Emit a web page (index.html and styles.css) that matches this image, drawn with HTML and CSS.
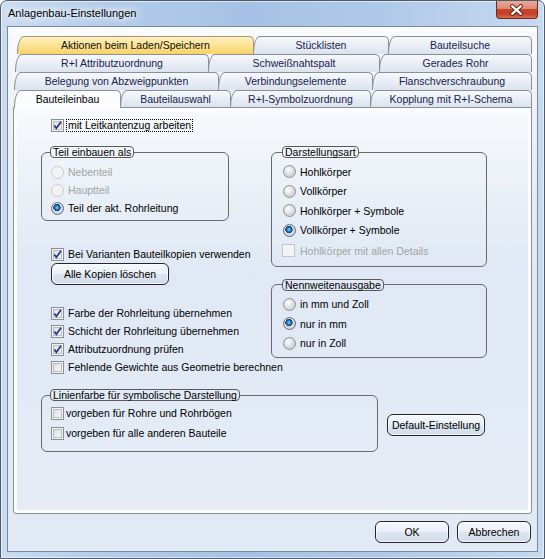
FILE: index.html
```html
<!DOCTYPE html>
<html lang="de">
<head>
<meta charset="utf-8">
<title>Anlagenbau-Einstellungen</title>
<link rel="stylesheet" href="styles.css">
</head>
<body>
<div class="window">
  <div class="titlebar">
    <span class="title">Anlagenbau-Einstellungen</span>
    <div class="close">
      <svg width="42" height="18" viewBox="0 0 42 18">
        <path d="M16.5 5 L25.5 13 M25.5 5 L16.5 13" stroke="#5a2218" stroke-width="4.2" stroke-linecap="round" fill="none"/>
        <path d="M16.5 5 L25.5 13 M25.5 5 L16.5 13" stroke="#ffffff" stroke-width="2.2" stroke-linecap="round" fill="none"/>
      </svg>
    </div>
  </div>
  <div class="client">
    <div class="tabs">
      <div class="tabrow r1">
        <div class="tab hot t-aktionen">Aktionen beim Laden/Speichern</div>
        <div class="tab t-stueck">Stücklisten</div>
        <div class="tab t-suche">Bauteilsuche</div>
      </div>
      <div class="tabrow r2">
        <div class="tab t-ri">R+I Attributzuordnung</div>
        <div class="tab t-schweiss">Schweißnahtspalt</div>
        <div class="tab t-gerade">Gerades Rohr</div>
      </div>
      <div class="tabrow r3">
        <div class="tab t-beleg">Belegung von Abzweigpunkten</div>
        <div class="tab t-verb">Verbindungselemente</div>
        <div class="tab t-flansch">Flanschverschraubung</div>
      </div>
      <div class="tabrow r4">
        <div class="tab active t-einbau">Bauteileinbau</div>
        <div class="tab t-auswahl">Bauteilauswahl</div>
        <div class="tab t-symbol">R+I-Symbolzuordnung</div>
        <div class="tab t-kopplung">Kopplung mit R+I-Schema</div>
      </div>
    </div>

    <div class="panel">
      <div class="panel-inner">
        <div class="opt top-check">
          <span class="cb"><svg class="mark" width="11" height="11" viewBox="0 0 11 11"><path d="M2.3 5.4 L4.4 8.3 L9 1.8" stroke="#22378a" stroke-width="1.7" fill="none"/></svg></span>
          <span class="focus">mit Leitkantenzug arbeiten</span>
        </div>

        <div class="cols">
          <div class="col-left">
            <fieldset class="group g1">
              <legend>Teil einbauen als</legend>
              <div class="opt r18 disabled"><span class="rb"></span>Nebenteil</div>
              <div class="opt r18 disabled"><span class="rb"></span>Hauptteil</div>
              <div class="opt r18"><span class="rb on"></span>Teil der akt. Rohrleitung</div>
            </fieldset>

            <div class="opt r18 varianten">
              <span class="cb"><svg class="mark" width="11" height="11" viewBox="0 0 11 11"><path d="M2.3 5.4 L4.4 8.3 L9 1.8" stroke="#22378a" stroke-width="1.7" fill="none"/></svg></span>Bei Varianten Bauteilkopien verwenden
            </div>
            <button class="btn btn-kopien" type="button">Alle Kopien löschen</button>

            <div class="checks">
              <div class="opt r18"><span class="cb"><svg class="mark" width="11" height="11" viewBox="0 0 11 11"><path d="M2.3 5.4 L4.4 8.3 L9 1.8" stroke="#22378a" stroke-width="1.7" fill="none"/></svg></span>Farbe der Rohrleitung übernehmen</div>
              <div class="opt r18"><span class="cb"><svg class="mark" width="11" height="11" viewBox="0 0 11 11"><path d="M2.3 5.4 L4.4 8.3 L9 1.8" stroke="#22378a" stroke-width="1.7" fill="none"/></svg></span>Schicht der Rohrleitung übernehmen</div>
              <div class="opt r18"><span class="cb"><svg class="mark" width="11" height="11" viewBox="0 0 11 11"><path d="M2.3 5.4 L4.4 8.3 L9 1.8" stroke="#22378a" stroke-width="1.7" fill="none"/></svg></span>Attributzuordnung prüfen</div>
              <div class="opt r18"><span class="cb"></span>Fehlende Gewichte aus Geometrie berechnen</div>
            </div>
          </div>

          <div class="col-right">
            <fieldset class="group g2">
              <legend>Darstellungsart</legend>
              <div class="opt r195"><span class="rb"></span>Hohlkörper</div>
              <div class="opt r195"><span class="rb"></span>Vollkörper</div>
              <div class="opt r195"><span class="rb"></span>Hohlkörper + Symbole</div>
              <div class="opt r195"><span class="rb on"></span>Vollkörper + Symbole</div>
              <div class="opt r195 disabled last"><span class="cb"></span>Hohlkörper mit allen Details</div>
            </fieldset>

            <fieldset class="group g3">
              <legend>Nennweitenausgabe</legend>
              <div class="opt r195"><span class="rb"></span>in mm und Zoll</div>
              <div class="opt r195"><span class="rb on"></span>nur in mm</div>
              <div class="opt r195"><span class="rb"></span>nur in Zoll</div>
            </fieldset>
          </div>
        </div>

        <div class="bottom">
          <fieldset class="group g4">
            <legend>Linienfarbe für symbolische Darstellung</legend>
            <div class="opt r20"><span class="cb"></span>vorgeben für Rohre und Rohrbögen</div>
            <div class="opt r20"><span class="cb"></span>vorgeben für alle anderen Bauteile</div>
          </fieldset>
          <button class="btn btn-default" type="button">Default-Einstellung</button>
        </div>
      </div>
    </div>

    <div class="footer">
      <button class="btn btn-ok" type="button">OK</button>
      <button class="btn btn-cancel" type="button">Abbrechen</button>
    </div>
  </div>
</div>
</body>
</html>
```

FILE: styles.css
```css
html, body {
  margin: 0;
  padding: 0;
}

body {
  width: 545px;
  height: 559px;
  overflow: hidden;
  font-family: "Liberation Sans", Arial, sans-serif;
  font-size: 10.5px;
  color: #000;
  background: #ffffff;
}

/* ---------- window frame ---------- */
.window {
  box-sizing: border-box;
  width: 545px;
  height: 559px;
  border: 1px solid #4f5b6b;
  border-radius: 7px 7px 0 0;
  padding: 0 6px 6px 6px;
  display: flex;
  flex-direction: column;
  background: linear-gradient(to right, #cadcf2 0%, #b4cdeb 18%, #a5c2e6 45%, #afc9e9 70%, #c6daf1 100%);
  box-shadow: inset 0 0 0 1px rgba(255, 255, 255, 0.55);
}

.titlebar {
  height: 25px;
  flex: none;
  display: flex;
  justify-content: space-between;
  align-items: flex-start;
}

.title {
  padding-left: 1px;
  line-height: 25px;
  font-size: 11px;
  color: #000;
  text-shadow: 0 0 6px #ffffff, 0 0 10px #ffffff, 0 0 14px #ffffff;
}

.close {
  width: 42px;
  height: 18px;
  margin-top: 0;
  box-sizing: border-box;
  border: 1px solid #6d2b1f;
  border-top: none;
  border-radius: 0 0 4px 4px;
  background: linear-gradient(#e9a999 0%, #dc8a76 45%, #c8452d 50%, #c63e25 75%, #d8704f 100%);
  display: flex;
}

.close svg {
  display: block;
  margin-left: -1px;
}

/* ---------- client area ---------- */
.client {
  flex: 1;
  box-sizing: border-box;
  border: 1px solid #7b899c;
  padding: 9px 5px 8px 5px;
  display: flex;
  flex-direction: column;
  background: linear-gradient(#f9fbfd 0%, #edf2f9 15%, #e0e9f5 45%, #e1e9f5 100%);
}

/* ---------- tabs ---------- */
.tabs {
  flex: none;
  display: flex;
  flex-direction: column;
}

.tabrow {
  display: flex;
  height: 18px;
}

.tabrow.r4 {
  height: 17px;
}

.r1 { margin-left: 4px; }
.r2 { margin-left: 2px; }
.r3 { margin-left: 1px; }
.r4 { margin-left: 1px; }

.tab {
  flex: none;
  box-sizing: border-box;
  height: 18px;
  border: 1px solid #8b8f98;
  border-bottom: none;
  border-radius: 7px 5px 0 0 / 16px 5px 0 0;
  background: linear-gradient(#f6f8fb 0%, #e9eef5 50%, #dbe3ee 100%);
  color: #18224e;
  text-align: center;
  line-height: 16px;
  white-space: nowrap;
  margin-left: -1px;
}

.tabrow .tab:first-child {
  margin-left: 0;
}

.tab.hot {
  background: linear-gradient(#fdefbd 0%, #fbe294 50%, #f7d268 100%);
  border-color: #a49674;
  color: #111;
}

.tab.active {
  position: relative;
  z-index: 2;
  height: 18px;
  background: #fbfcfe;
  color: #000;
}

.r4 .tab { height: 17px; }
.r4 .tab.active { height: 18px; }

.t-aktionen { width: 237px; }
.t-stueck { width: 136px; }
.t-suche { width: 144px; }
.t-ri { width: 194px; }
.t-schweiss { width: 172px; }
.t-gerade { width: 153px; }
.t-beleg { width: 205px; }
.t-verb { width: 155px; }
.t-flansch { width: 160px; }
.t-einbau { width: 107px; }
.t-auswahl { width: 111px; }
.t-symbol { width: 141px; }
.t-kopplung { width: 162px; }

/* ---------- panel ---------- */
.panel {
  flex: none;
  box-sizing: border-box;
  height: 407px;
  border: 1px solid #8b8f98;
  border-radius: 0 0 3px 3px;
  padding: 3px;
  background: #fbfcfe;
}

.panel-inner {
  box-sizing: border-box;
  height: 100%;
  padding: 5px 0 0 0;
  background: linear-gradient(#f7f9fc 0%, #eaf0f7 20%, #dfe8f4 40%, #e2eaf5 70%, #e5ecf6 100%);
}

/* ---------- options ---------- */
.opt {
  display: flex;
  align-items: center;
  white-space: nowrap;
  height: 18px;
}

.opt.r18 { height: 18px; }
.opt.r195 { height: 19.5px; }
.opt.r20 { height: 20px; }

.opt.disabled {
  color: #a4a4a4;
}

.cb {
  flex: none;
  box-sizing: border-box;
  width: 13px;
  height: 13px;
  margin-right: 4px;
  border: 1px solid #8e8f8f;
  background: linear-gradient(135deg, #d3d6db 0%, #e9ebee 50%, #fafafa 100%);
  box-shadow: inset 0 0 0 1px #f3f3f3, inset 0 0 0 2px #b9bdc2;
}

.cb .mark {
  display: block;
}

.disabled .cb {
  border-color: #c6c6c6;
  background: #f4f4f4;
  box-shadow: none;
}

.rb {
  flex: none;
  box-sizing: border-box;
  width: 13px;
  height: 13px;
  margin-right: 4px;
  border: 1px solid #8e8f8f;
  border-radius: 50%;
  background: radial-gradient(circle at 40% 35%, #ffffff 0, #f1f1f2 2px, #d2d5d9 6px);
}

.rb.on {
  border-color: #5e6d7e;
  background:
    radial-gradient(circle at 45% 42%, #8ad8fa 0, #2f8fd3 1.6px, #0c4f8c 2.9px, #26384c 3.5px, rgba(255, 255, 255, 0) 3.8px),
    radial-gradient(circle at 40% 35%, #ffffff 0, #f1f1f2 2px, #d2d5d9 6px);
}

.disabled .rb {
  border-color: #c9c9c9;
  background: #f3f3f3;
}

.top-check {
  margin-left: 34px;
}

.top-check .cb {
  margin-right: 2px;
}

.focus {
  border: 1px dotted #000;
  padding: 0 1px;
  line-height: 11px;
}

/* ---------- columns ---------- */
.cols {
  display: grid;
  grid-template-columns: 188px 216px;
  column-gap: 42px;
  align-items: start;
  margin: 12px 0 0 24px;
}

.group {
  margin: 0;
  min-width: 0;
  border: 1px solid #6a6a6a;
  border-radius: 6px;
}

.group legend {
  margin-left: -1px;
  padding: 0 2px;
  border: 1px solid #5a5a5a;
  border-radius: 4px;
  line-height: 10px;
  white-space: nowrap;
}

.g1 {
  padding: 5px 0 3px 9px;
}

.varianten {
  margin: 24px 0 0 10px;
}

.btn {
  font-family: inherit;
  font-size: 10.5px;
  color: #000;
  box-sizing: border-box;
  height: 22px;
  padding: 0;
  border: 1px solid #262626;
  border-radius: 6px;
  background: linear-gradient(#f5f8fc 0%, #eaf0f7 48%, #dbe4ef 52%, #d3ddea 100%);
  box-shadow: inset 0 0 0 1px rgba(255, 255, 255, 0.75);
  white-space: nowrap;
}

.btn-kopien {
  display: block;
  width: 118px;
  margin: 0 0 0 10px;
}

.checks {
  margin: 19px 0 0 10px;
}

.g2 {
  padding: 4px 0 5px 11px;
}

.g2 .last {
  margin-top: 1px;
}

.g2 .last .cb {
  margin-left: -1px;
  margin-right: 5px;
}

.g3 {
  margin-top: 12px;
  padding: 4px 0 4px 11px;
}

/* ---------- bottom row ---------- */
.bottom {
  display: flex;
  align-items: flex-start;
  margin: 13px 0 0 24px;
}

.g4 {
  width: 337px;
  box-sizing: border-box;
  padding: 2px 0 8px 9px;
}

.g4 .cb {
  margin-right: 2px;
}

.btn-default {
  width: 98px;
  margin: 25px 0 0 9px;
}

/* ---------- footer ---------- */
.footer {
  display: flex;
  justify-content: flex-end;
  gap: 8px;
  margin: 7px 1px 0 0;
}

.btn-ok,
.btn-cancel {
  width: 74px;
}
```
